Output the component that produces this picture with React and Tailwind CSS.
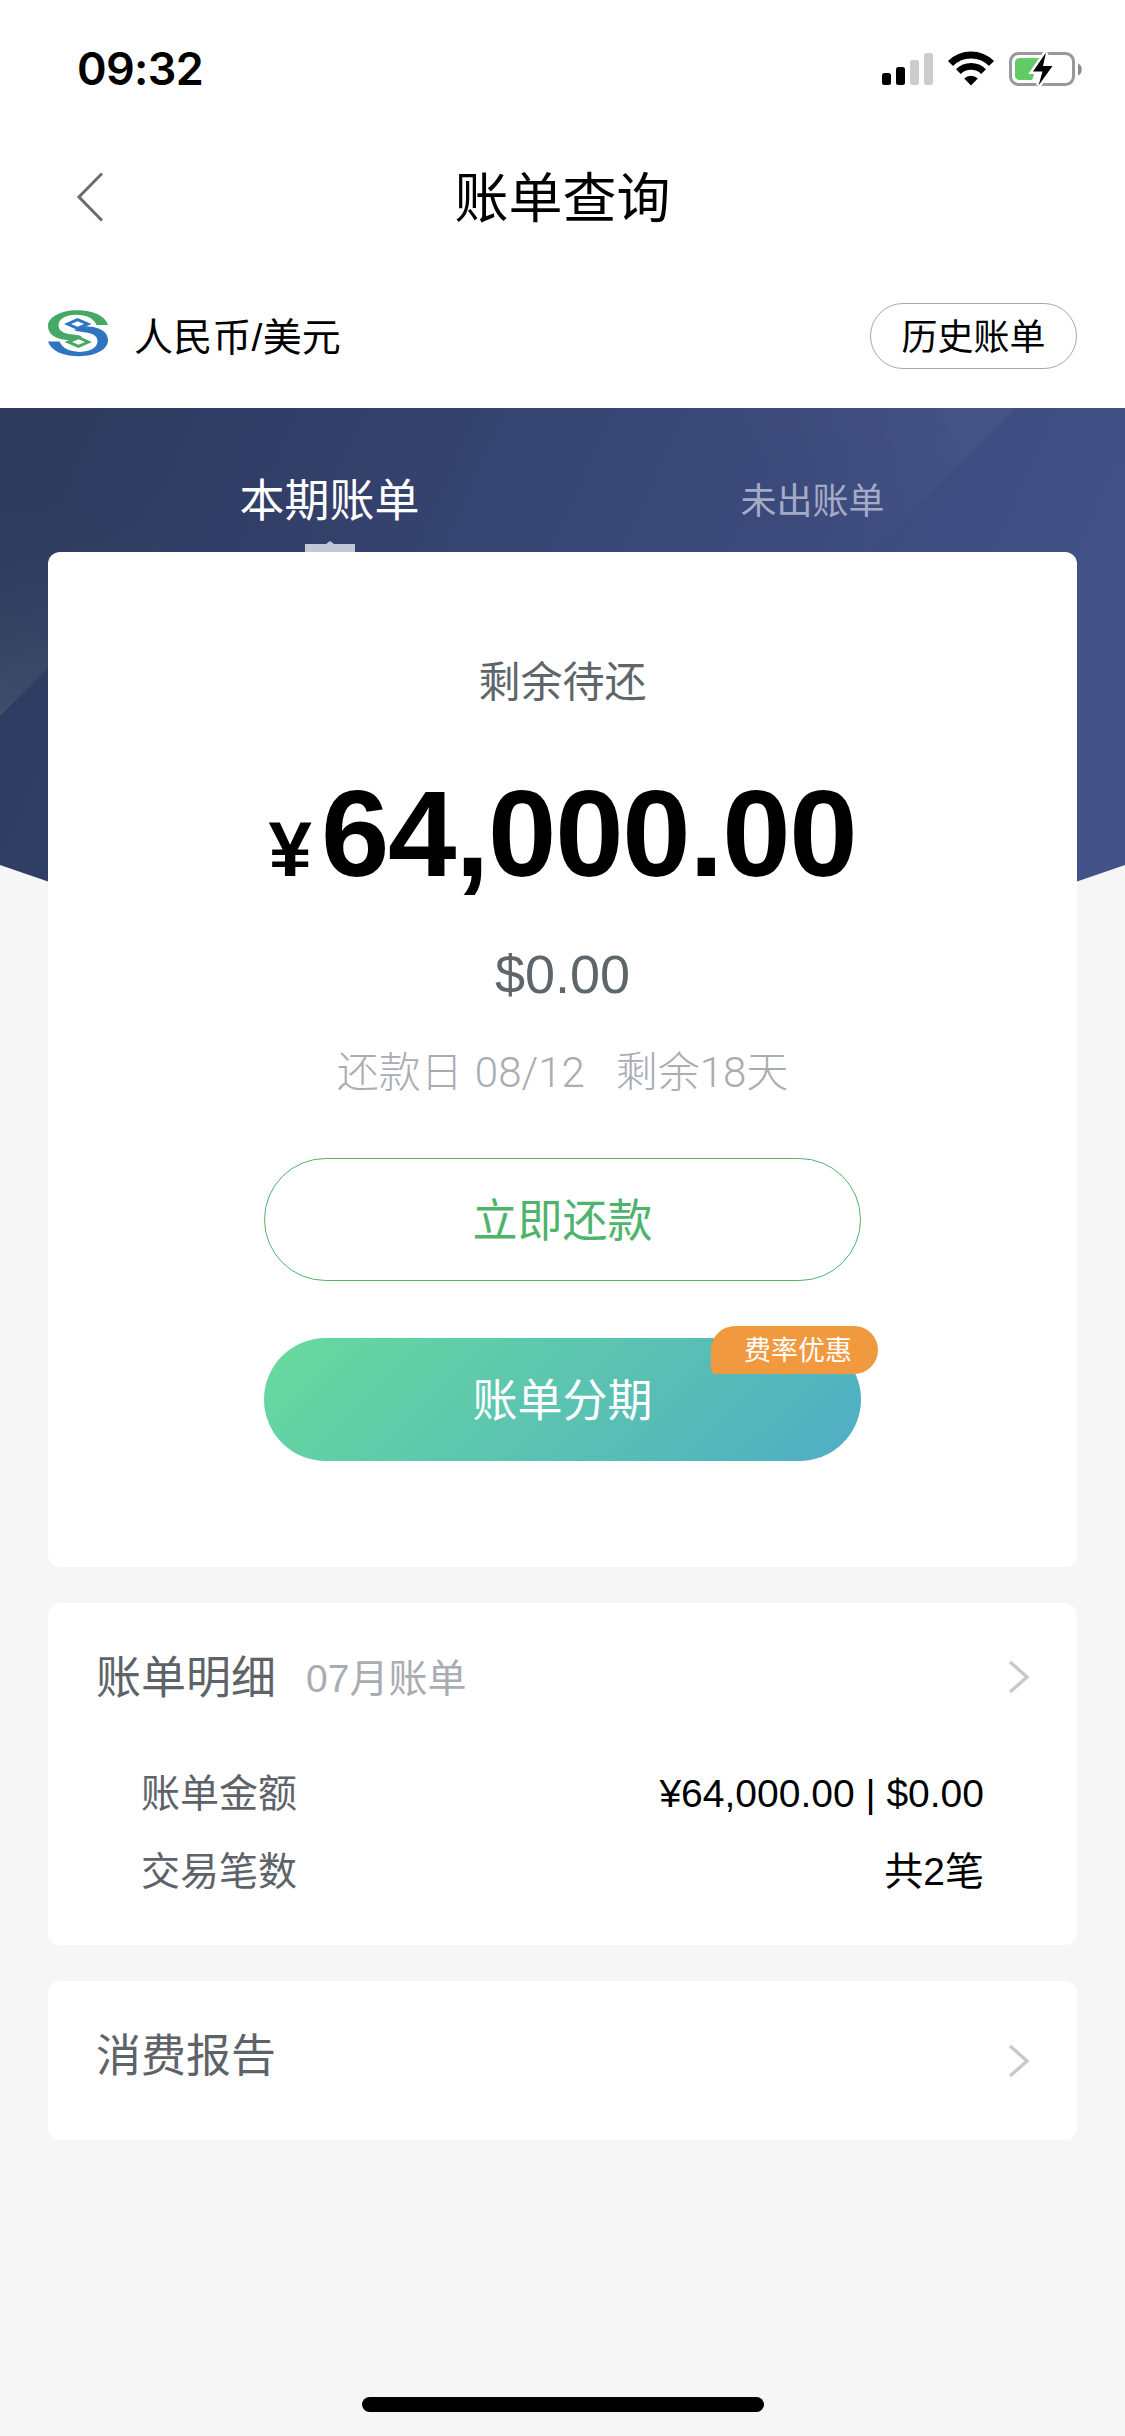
import { clsx } from "clsx";

const tabs = [
  { label: "本期账单", active: true },
  { label: "未出账单", active: false },
];

const details = [
  { label: "账单金额", value: "¥64,000.00 | $0.00" },
  { label: "交易笔数", value: "共2笔" },
];

const Chevron = ({ className }) => (
  <svg viewBox="0 0 22 34" fill="none" className={clsx("w-[22px] h-[34px]", className)}>
    <path d="M2 2 L19 17 L2 32" stroke="#c8c9cd" strokeWidth="3.400" />
  </svg>
);

const StatusIcons = () => (
  <svg viewBox="0 0 202 36" className="w-[202px] h-9">
    {/* Signal */}
    <rect x="1" y="22" width="9" height="12" rx="2.5" />
    <rect x="15" y="16" width="9" height="18" rx="2.5" />
    <rect x="29" y="9" width="9" height="25" rx="2.5" fill="#ccc" />
    <rect x="43" y="2" width="9" height="32" rx="2.5" fill="#ccc" />

    {/* Wifi */}
    <g fill="none" stroke="#000">
      <path d="M69.500 12.500 A 29 29 0 0 1 110.500 12.500" strokeWidth="7.200" />
      <path d="M77.400 20.600 A 18 18 0 0 1 102.600 20.600" strokeWidth="6.800" />
    </g>
    <path d="M90 34.500 L83.200 27.600 A 9.800 9.800 0 0 1 96.800 27.600 Z" />

    {/* Battery */}
    <rect x="129.500" y="2.500" width="63" height="31" rx="8" fill="none" stroke="#999" strokeWidth="3" />
    <path d="M197 12.500 C202 14 202 23 197 24.500 Z" fill="#8c8c8c" />
    <path d="M139 7 H159 L151 29 H139 Q134 29 134 24 V12 Q134 7 139 7 Z" fill="#62cb66" />
    <path
      d="M165 1.500 L152 20.500 H161.500 L157.500 34.500 L171.500 15 H162 Z"
      stroke="#fff"
      strokeWidth="5"
      paintOrder="stroke"
    />
  </svg>
);

// The lower half of the mark is the upper half turned by 180 degrees
const logoHalf =
  "M60 15 C57 5.500 45 0.300 29 0.300 C12 0.300 0 7.500 0 16 C0 23.500 6 28 15 29.500 L22 30.300 L34 26.500 C31 24.800 27 24.800 22 24.200 C14 23 10.500 20 10.500 15.500 C10.500 9 17.500 4.700 28 4.700 C39 4.700 46 8.500 48.500 15 Z";

const BankLogo = () => (
  <svg viewBox="0 0 60 48" className="w-[60px] h-12 mb-1">
    <path d={logoHalf} fill="#45a864" />
    <path d={logoHalf} fill="#2f74bf" transform="rotate(180 30 23.300)" />
    <path d="M29.500 8 L43.500 14 L29.500 20 L16 14 Z" fill="#2f74bf" />
    <path d="M29.500 11.200 L36 14 L29.500 16.800 L23 14 Z" fill="#fff" />
    <path d="M30.500 26 L44 32 L30.500 38 L16.500 32 Z" fill="#45a864" />
    <path d="M30.500 29.200 L37 32 L30.500 34.800 L24 32 Z" fill="#fff" />
  </svg>
);

const HeroBackground = () => (
  <svg viewBox="0 0 1125 550" className="absolute inset-x-0 top-0 w-[1125px] h-[550px]">
    <defs>
      <linearGradient id="hero" gradientUnits="userSpaceOnUse" x1="80" y1="0" x2="980" y2="400">
        <stop offset="0" stopColor="#2e3b5f" />
        <stop offset="0.200" stopColor="#313f68" />
        <stop offset="1" stopColor="#425187" />
      </linearGradient>
      <linearGradient id="glowLeft" gradientUnits="userSpaceOnUse" x1="0" y1="308" x2="0" y2="90">
        <stop offset="0" stopColor="#6c7880" stopOpacity="0.280" />
        <stop offset="1" stopColor="#3a4a58" stopOpacity="0" />
      </linearGradient>
      <linearGradient id="glowRight" gradientUnits="userSpaceOnUse" x1="980" y1="0" x2="840" y2="140">
        <stop offset="0" stopColor="#fff" stopOpacity="0.035" />
        <stop offset="1" stopColor="#fff" stopOpacity="0" />
      </linearGradient>
    </defs>
    <path d="M0 0 H1125 V457 L1077 473.500 C900 530 225 530 48 473.500 L0 457 Z" fill="url(#hero)" />
    <path d="M0 0 V308 L308 0 Z" fill="url(#glowLeft)" />
    <path d="M1015 0 L870 145 L700 145 V0 Z" fill="url(#glowRight)" />
  </svg>
);

const App = () => {
  return (
    <div className="w-[1125px] h-[2436px] overflow-hidden flex flex-col bg-[#f6f6f6] text-black font-['Liberation_Sans','Noto_Sans_CJK_SC',sans-serif]">
      <header className="h-[408px] shrink-0 bg-white">
        {/* Status bar */}
        <div className="h-[131px] pt-[51px] pl-[77px] pr-[42px] flex items-start justify-between">
          <span className="font-['Inter',sans-serif] font-semibold text-[45px] leading-9 tracking-[-0.7px]">
            09:32
          </span>
          <StatusIcons />
        </div>

        {/* Title bar */}
        <div className="h-[132px] px-[75px] grid grid-cols-[1fr_auto_1fr] items-center">
          <svg viewBox="0 0 28 50" fill="none" className="w-7 h-[50px]">
            <path d="M27 1.500 L4 25 L27 48.500" stroke="#6b6b6b" strokeWidth="3" />
          </svg>
          <h1 className="pt-1 text-[54px] leading-[54px]">账单查询</h1>
        </div>

        {/* Account */}
        <div className="h-[145px] px-12 flex items-center justify-between">
          <div className="flex items-center gap-[26px]">
            <BankLogo />
            <span className="pt-[5px] text-[39px] leading-[40px] tracking-[0.2px]">人民币/美元</span>
          </div>
          <button className="w-[207px] h-[66px] mt-px pt-[3px] rounded-full border border-[#a8a8a8] text-[36px] leading-none">
            历史账单
          </button>
        </div>
      </header>

      <main className="relative px-12 flex flex-col gap-9">
        <HeroBackground />

        <div className="relative">
          {/* Tabs */}
          <nav className="h-36 pl-10 flex">
            {tabs.map((tab) => (
              <div
                key={tab.label}
                className={clsx(
                  "relative w-[483px] pt-[71px] text-center leading-[46px]",
                  tab.active ? "text-white text-[45px]" : "text-[#a5abc6] text-[36px]"
                )}
              >
                {tab.label}
                {tab.active && (
                  <svg viewBox="0 0 50 11" className="absolute bottom-0 left-[217px] w-[50px] h-[11px]">
                    <path d="M0 3 H21 L25 0 L29 3 H50 V11 H0 Z" fill="#c4c7d8" />
                  </svg>
                )}
              </div>
            ))}
          </nav>

          {/* Balance */}
          <section className="h-[1015px] pt-[107px] bg-white rounded-xl flex flex-col items-center">
            <p className="text-[42px] leading-[48px] text-[#5e666b]">剩余待还</p>
            <div className="mt-[71px] h-[112px] flex items-baseline font-bold leading-[112px]">
              <span className="text-[78px]">¥</span>
              <span className="ml-[9px] text-[123px] tracking-[-1.3px]">64,000.00</span>
            </div>
            <p className="mt-[54px] text-[54px] leading-[60px] text-[#5e666b]">$0.00</p>
            <p className="mt-[44px] flex gap-[31px] text-[42px] leading-[50px] font-light text-[#a9acb3] font-['Roboto','Noto_Sans_CJK_SC',sans-serif]">
              <span className="[word-spacing:2px]">还款日 08/12</span>
              <span>剩余18天</span>
            </p>
            <button className="mt-[60px] w-[597px] h-[123px] pt-[3px] shrink-0 rounded-full border border-[#4fb36c] text-[45px] leading-none text-[#4fb36c]">
              立即还款
            </button>
            <div className="relative mt-[57px]">
              <button className="w-[597px] h-[123px] pt-[3px] rounded-full bg-[linear-gradient(135deg,#68da9d,#4fadc5)] text-[45px] leading-none text-white">
                账单分期
              </button>
              <span className="absolute -top-3 left-[447px] w-[167px] h-12 pl-[33px] rounded-[24px_24px_24px_5px] bg-[#f0993f] text-[27px] leading-[50px] text-white">
                费率优惠
              </span>
            </div>
          </section>
        </div>

        {/* Bill details */}
        <section className="relative h-[342px] bg-white rounded-xl pt-[49px]">
          <div className="h-[50px] pl-12 pr-[47px] flex items-center">
            <h2 className="pt-1 text-[45px] leading-[50px] text-[#5e6369]">账单明细</h2>
            <span className="ml-[30px] pt-1 text-[39px] leading-[50px] text-[#a9acb3]">07月账单</span>
            <Chevron className="ml-auto" />
          </div>
          <dl className="mt-[53px] pl-[93px] pr-[93px]">
            {details.map((row) => (
              <div key={row.label} className="h-[78px] flex items-center justify-between text-[39px] leading-[40px]">
                <dt className="text-[#5e6369]">{row.label}</dt>
                <dd>{row.value}</dd>
              </div>
            ))}
          </dl>
        </section>

        {/* Spending report */}
        <section className="relative h-[159px] bg-white rounded-xl pl-12 pr-[47px] flex items-center">
          <h2 className="pb-2 text-[45px] leading-[50px] text-[#5e6369]">消费报告</h2>
          <Chevron className="ml-auto" />
        </section>
      </main>

      {/* Home indicator */}
      <div className="mt-auto mb-6 mx-auto w-[402px] h-[15px] shrink-0 rounded-full bg-black" />
    </div>
  );
};

export default App;
